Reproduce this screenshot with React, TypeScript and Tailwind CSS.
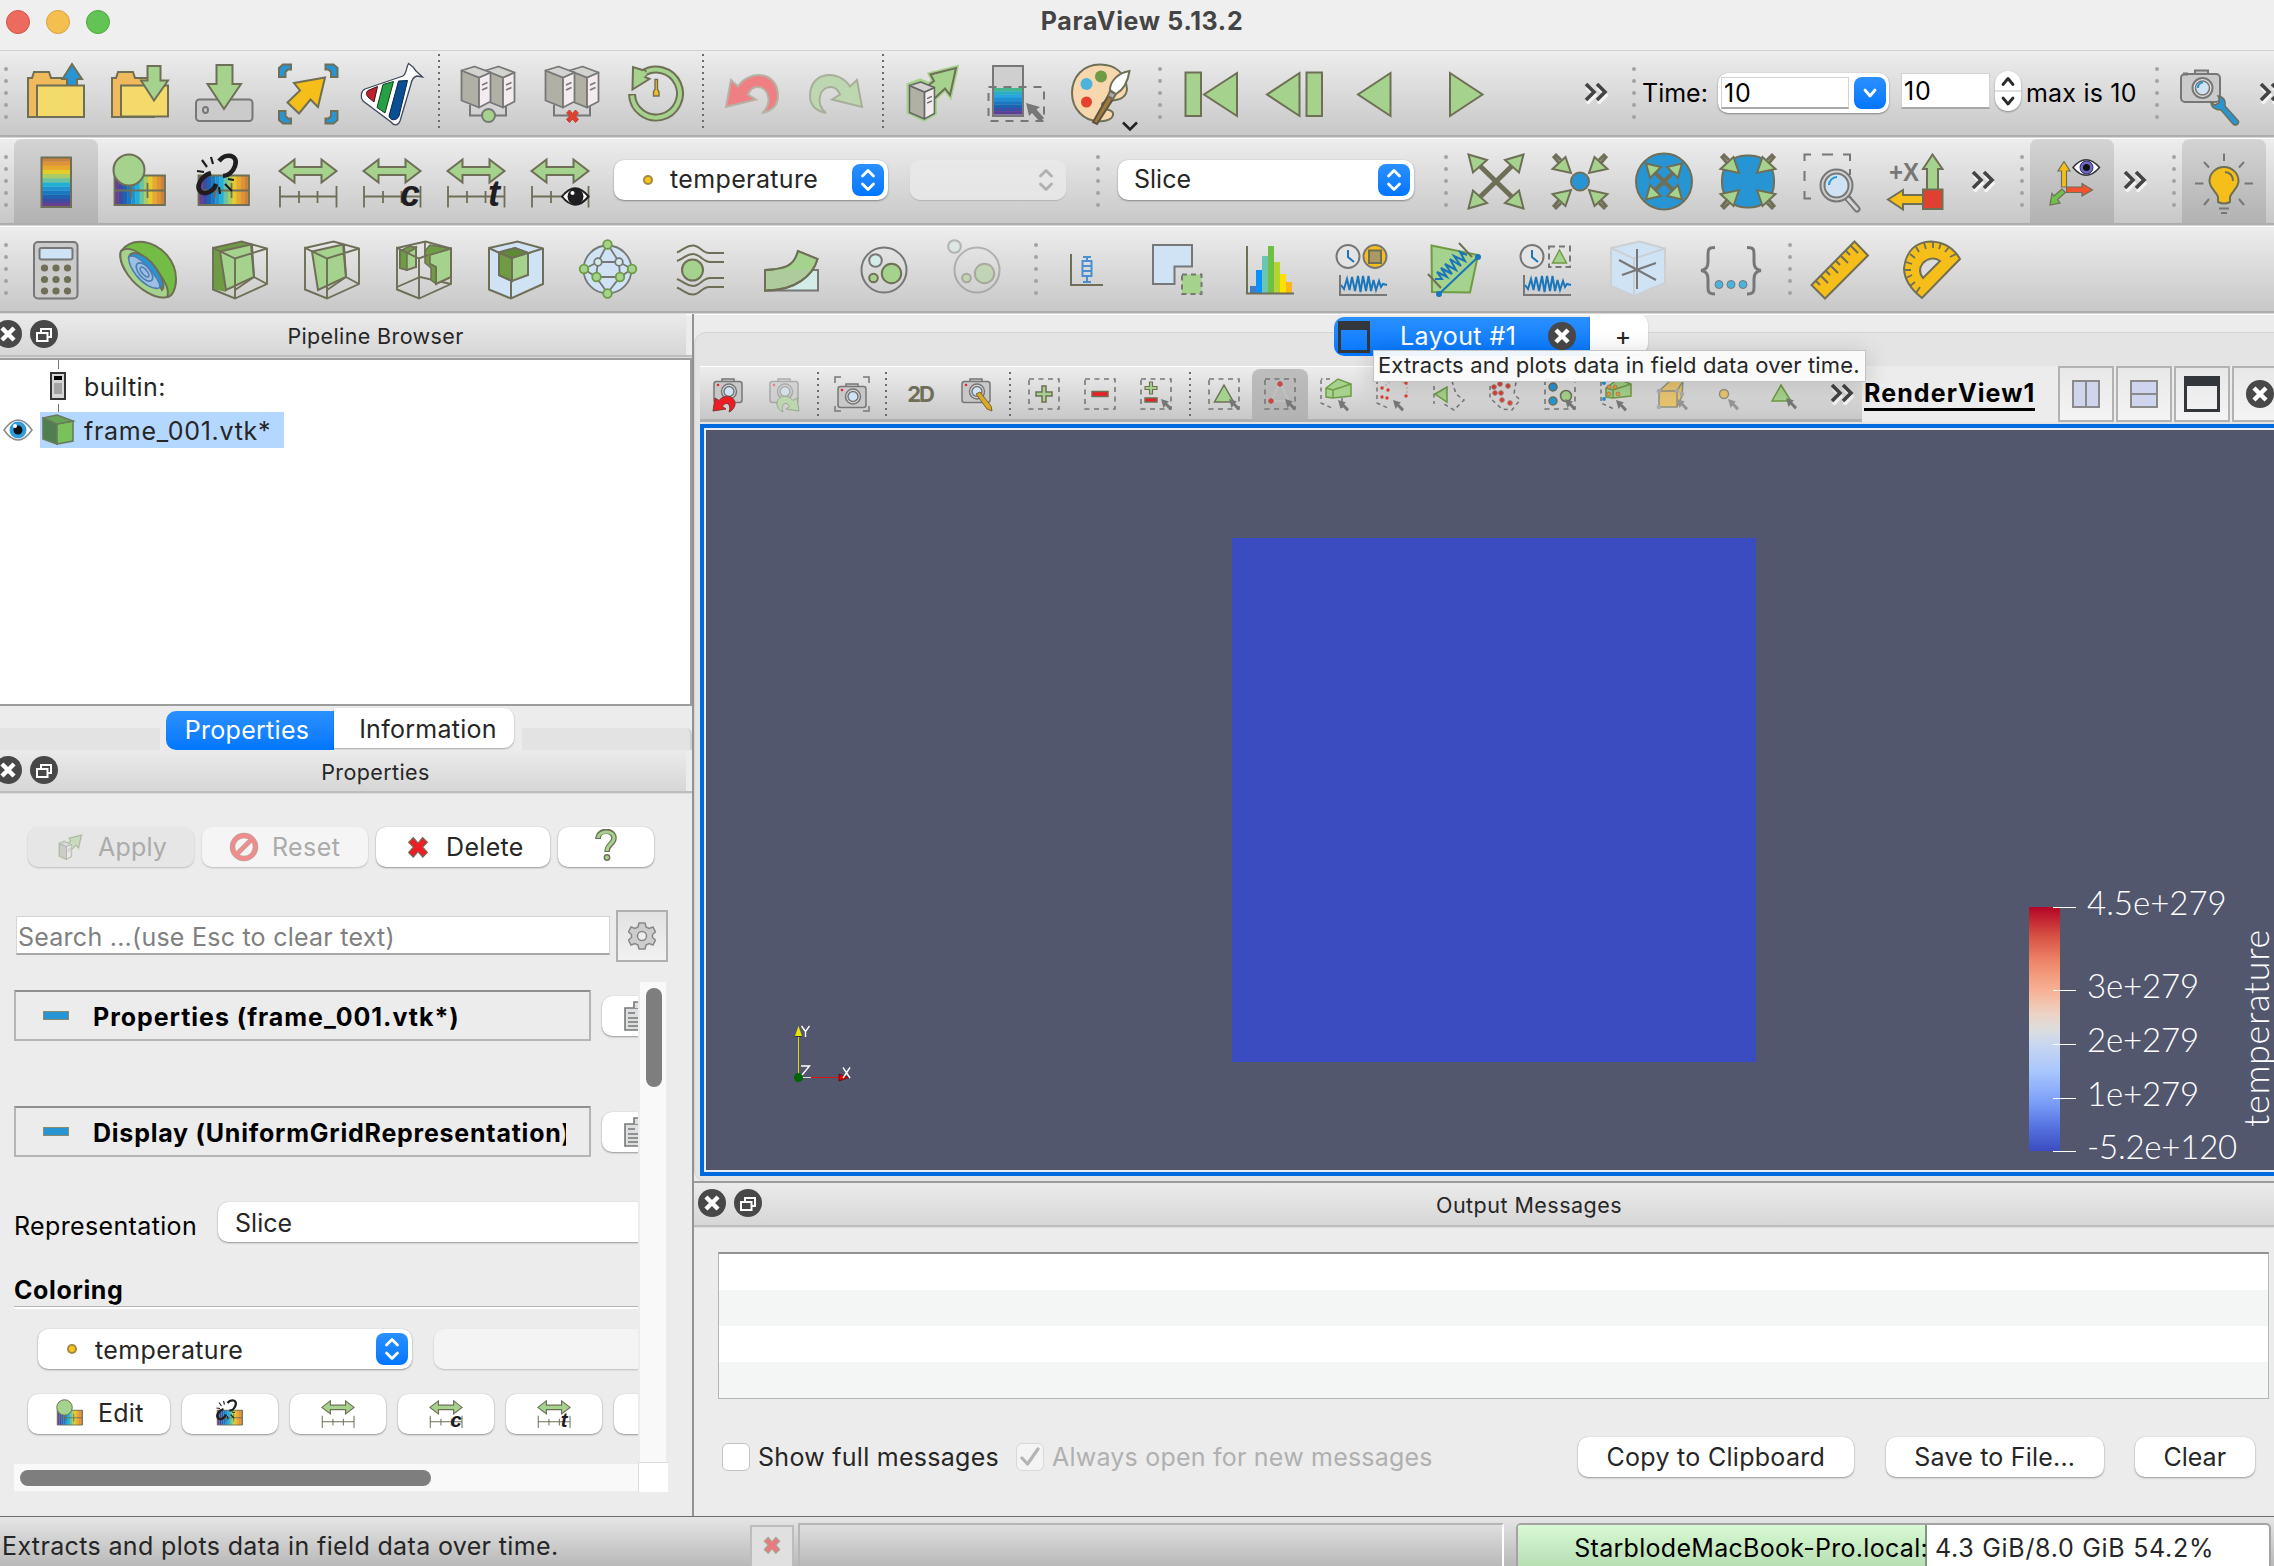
import React, { useLayoutEffect, useRef, useState } from "react";

const OL = "#6f6f57";
const GR = "#a5d28c";
const DG = "#6f9b45";
const BL = "#2795d4";
const LB = "#cfe3f5";
const YE = "#f5be18";
const GY = "#777777";

/* ---------- text that keeps a given line width by tracking ---------- */
function Fit({ w, className = "", children }: { w: number; className?: string; children: string }) {
  const ref = useRef<HTMLSpanElement>(null);
  const [ls, setLs] = useState(0);
  useLayoutEffect(() => {
    if (ref.current) {
      const natural = ref.current.offsetWidth;
      setLs((w - natural) / children.length);
    }
  }, []);
  return (
    <span ref={ref} className={`inline-block shrink-0 whitespace-pre ${className}`} style={{ letterSpacing: ls }}>
      {children}
    </span>
  );
}

type IP = { size?: number; className?: string };
function Svg({ size = 64, className = "", children, box = 64 }: IP & { children: React.ReactNode; box?: number }) {
  return (
    <svg
      width={size}
      height={size}
      viewBox={`0 0 ${box} ${box}`}
      className={`block shrink-0 overflow-visible ${className}`}
      fill="none"
      stroke={OL}
      strokeWidth={2}
      strokeLinejoin="miter"
    >
      {children}
    </svg>
  );
}

/* ---------- main toolbar icons ---------- */
const FolderBack = () => <path d="M4 56V17H8L10 11H25L27 17H46V56Z" fill="#f0b95c" />;
const OpenIcon = (p: IP) => (
  <Svg {...p}>
    <FolderBack />
    <path d="M43 26V18H38.5L48 3L58 18H53V26Z" fill={BL} />
    <path d="M13 24.500H60V56H13Z" fill="#f4da6b" />
  </Svg>
);
const LoadStateIcon = (p: IP) => (
  <Svg {...p}>
    <FolderBack />
    <path d="M13 24.500H60V55.500H13Z" fill="#f4da6b" />
    <path d="M39.500 5H52.500V19.500H60L46 39.500L33 19.500H39.500Z" fill={GR} />
  </Svg>
);
const SaveIcon = (p: IP) => (
  <Svg {...p}>
    <rect x="4" y="38.500" width="56.500" height="21.500" rx="3.500" fill="#cbcbcb" stroke={GY} />
    <ellipse cx="13.500" cy="49" rx="2.500" ry="3" stroke={GY} />
    <path d="M24.500 4H40.500V23H49L32 48L15.500 23H24.500Z" fill={GR} />
  </Svg>
);
const ExtractsIcon = (p: IP) => (
  <Svg {...p}>
    {["", "translate(64.500 0) scale(-1 1)", "translate(0 66) scale(1 -1)", "translate(64.500 66) scale(-1 -1)"].map((t) => (
      <path key={t} transform={t} d="M3 16V7L7 3.500H15V8.500H12L9.500 11V16Z" fill={BL} />
    ))}
    <path d="M49 16.500L42 46L34.500 38.500L23 52.500L11.500 41.500L24 29.500L18 22Z" fill={YE} />
  </Svg>
);
const CatalystIcon = (p: IP) => (
  <Svg {...p}>
    <path
      d="M5 28L43 15C47 12 46 7 48.500 2.500L53 6L56 10L62.500 16L57 15C53 16 51.500 20 51 23L40 60C38 65 34 65 31 61L3 40C0 36 1 30 5 28Z"
      fill="#fff"
      stroke="#3f4a5a"
      strokeWidth="1.300"
    />
    <path d="M8 29.500L17.500 25.500L14 41L8 36C6 34 6 31 8 29.500Z" fill="#bd1f2d" stroke="#3d1018" strokeWidth="1" />
    <path d="M23 23.500L33.500 20.500L25 52L17 46.500Z" fill="#27a045" stroke="#10401d" strokeWidth="1" />
    <path d="M38.500 20L47.500 19.500L39 55C37 60 30 60 29 55Z" fill="#0a4f94" stroke="#06264a" strokeWidth="1" />
  </Svg>
);
const Server = ({ t, s = GY }: { t?: string; s?: string }) => (
  <g transform={t} stroke={s} strokeWidth="1.800" strokeLinejoin="round">
    <path d="M0 4L17.500 11V41L0 34Z" fill="#b0b0a5" />
    <path d="M17.500 11L29 6V35L17.500 41Z" fill="#f4ebef" />
    <path d="M0 4L13 0L29 6L17.500 11Z" fill="#d3d3d0" />
    <path d="M20.500 18.500L26 16M20.500 23.500L26 21" strokeWidth="1.600" />
  </g>
);
const ConnectIcon = (p: IP) => (
  <Svg {...p}>
    <path d="M14 44V54.500H50V44" stroke={GY} />
    <Server t="translate(29.500 5.500)" />
    <Server t="translate(5.500 5.500)" />
    <circle cx="32.500" cy="54.500" r="6.500" fill={GR} stroke={GY} />
  </Svg>
);
const X_PATH = "M-6 -3L-3 -6L0 -2.500L3 -6L6 -3L3 0L6 3.500L3 6.500L0 3L-3 6.500L-6 3.500L-3 0Z";
const DisconnectIcon = (p: IP) => (
  <Svg {...p}>
    <path d="M14 44V54.500H50V44" stroke={GY} />
    <Server t="translate(29.500 5.500)" />
    <Server t="translate(5.500 5.500)" />
    <path transform="translate(32.500 55)" d={X_PATH} fill="#e0402f" stroke="#b9463a" strokeWidth="1" />
  </Svg>
);
const HistoryIcon = (p: IP) => (
  <Svg {...p}>
    <path d="M8 33A24 24 0 1 0 18 13" strokeWidth="8" />
    <path d="M8 34.500A24 24 0 1 0 18 13" stroke={GR} strokeWidth="4" />
    <path d="M9 6L8.500 28.500L25.500 18L20 15.500L21.500 10Z" fill={GR} />
    <path d="M14.500 14L20 9.500L23 13L18 18Z" fill={GR} stroke="none" />
    <path d="M31 18.500H33.500V28L35 31V35H29.500V31L31 28Z" fill={YE} strokeWidth="1.400" />
  </Svg>
);
const CURVE = "M6 46L11 19L18 25.500C28 9 58 9 58 35C58 45 51 50 42 52C53 43 49 26 37 26C32 26 29.500 30 28 33.500L36 38.500Z";
const UndoIcon = (p: IP) => (
  <Svg {...p}>
    <path d={CURVE} fill="#ee8084" stroke="#b6b2a4" />
  </Svg>
);
const RedoIcon = (p: IP) => (
  <Svg {...p}>
    <path transform="translate(64 0) scale(-1 1)" d={CURVE} fill="#bdd8b0" stroke="#a9ae9b" />
  </Svg>
);
const ApplyIcon = (p: IP) => (
  <Svg {...p}>
    <path d="M56 7L50 34L45 27.500L35 37L32 40L26 26L34 20L30.500 13.500Z" fill={GR} stroke={GR} strokeWidth="5" />
    <path d="M9 24L20 20L34.500 26V52L24 58L9 51Z" stroke={GR} strokeWidth="5" />
    <path d="M56 7L50 34L45 27.500L35 37L30 30L26 26L34 20L30.500 13.500Z" fill={GR} />
    <g transform="translate(9.500 21) scale(.86 .9)">
      <Server s="#666" />
    </g>
  </Svg>
);
const CMAP_V = ["#6b3f8f", "#3f4aa0", "#1f63b0", "#1878c0", "#1f93d2", "#22b1d6", "#6cc3a0", "#a8cc68", "#e3cd2a", "#e9a92b", "#e09332", "#c9833c"];
const SelectBarIcon = (p: IP) => (
  <Svg {...p}>
    <rect x="9" y="5" width="30" height="50" fill="#cfcfcf" stroke={GY} />
    {["#45b58f", "#25b0c8", "#2aa2dc", "#1f8fd3", "#1878c0", "#1d63b4", "#3a4fa5", "#5b3f94"].map((c, i) => (
      <rect key={c} x="10" y={27 + i * 3.300} width="28" height="3.500" fill={c} stroke="none" />
    ))}
    <rect x="4.500" y="26" width="55.500" height="34" strokeDasharray="8 7" stroke={GY} />
    <path d="M42 42L56 46L52.500 48.500L60 57L56 61L48 52L45 55Z" fill={GY} stroke="none" />
  </Svg>
);
const PaletteIcon = (p: IP) => (
  <Svg {...p}>
    <path d="M32 3.500C15 3.500 4 16 4 32C4 48 16 60 30 60C38 61 46 58 45 52C43 47 33 50 34 43C36 37 58 44 59 28C58 13 48 3.500 32 3.500Z" fill="#f7d8ae" />
    <circle cx="18.500" cy="23" r="6" fill="#4bb3dd" stroke="none" />
    <circle cx="33" cy="15.500" r="6" fill={DG} stroke="none" />
    <circle cx="18.500" cy="41" r="5.500" fill="#e5412d" stroke="none" />
    <path d="M40 35L45 38L29 63L25 61Z" fill="#a07a3c" stroke="#5d5440" />
    <path d="M42 30L48 33L45 38L40 35Z" fill="#a9a9a9" />
    <path d="M61.500 10C50 12 42 20 42 29L48 33C57 28 60 20 61.500 10Z" fill="#fff" />
    <path d="M55 61.500L62 68.500L69 61.500" stroke="#222" strokeWidth="2.600" />
  </Svg>
);
const FirstIcon = (p: IP) => (
  <Svg {...p}>
    <path d="M6.500 11.500H22V55H6.500ZM58 12V55L25 33.500Z" fill={GR} />
  </Svg>
);
const PrevIcon = (p: IP) => (
  <Svg {...p}>
    <path d="M43.500 11.500H59V55H43.500ZM36.500 12V55L4 33.500Z" fill={GR} />
  </Svg>
);
const BackIcon = (p: IP) => (
  <Svg {...p}>
    <path d="M43.500 12V55L11 33.500Z" fill={GR} />
  </Svg>
);
const PlayIcon = (p: IP) => (
  <Svg {...p}>
    <path d="M19 12V55L51.500 33.500Z" fill={GR} />
  </Svg>
);
const CameraToolIcon = (p: IP) => (
  <Svg {...p}>
    <rect x="18" y="9.500" width="13" height="4" fill="#cbcbcb" stroke={GY} />
    <rect x="4" y="13" width="39" height="28" rx="4" fill="#cbcbcb" stroke={GY} />
    <path d="M6 13H11" stroke={GY} strokeWidth="3" />
    <circle cx="25.500" cy="27" r="10" fill="#e4e4e4" stroke={GY} />
    <circle cx="25.500" cy="27" r="7" fill={LB} stroke={GY} strokeWidth="1.600" />
    <path d="M21 27A5 5 0 0 1 26 21.500" stroke={BL} />
    <path d="M41 35C47 36 49 40 48 45L61.500 60C62 64 58 65 56 63L44 49C38 49 34 46 34 41L38 44L42 42V37Z" fill={BL} strokeWidth="1.500" />
  </Svg>
);

/* ---------- variable / camera toolbar icons ---------- */
const ColorBarIcon = (p: IP) => (
  <Svg {...p}>
    {CMAP_V.map((c, i) => (
      <rect key={c} x="17" y={54 - i * 4.150} width="30" height="4.300" fill={c} stroke="none" />
    ))}
    <rect x="17.500" y="8.500" width="29.500" height="49.500" />
  </Svg>
);
const MapBox = () => (
  <g>
    {CMAP_V.map((c, i) => (
      <rect key={c} x={6.500 + i * 4.200} y="26" width="4.400" height="30" fill={c} stroke="none" />
    ))}
    <path d="M6.500 26.500H57V56H6.500ZM6.500 41.500H57M23 34V49M39.500 34V49" strokeWidth="1.800" />
  </g>
);
const EditMapIcon = (p: IP) => (
  <Svg {...p}>
    <MapBox />
    <circle cx="21" cy="21" r="15.500" fill={GR} />
  </Svg>
);
const SeparateMapIcon = (p: IP) => (
  <Svg {...p}>
    <MapBox />
    <g stroke="#1f1d20" strokeWidth="4.600">
      <path d="M27 12C34 3 47 6 43 17C41 23 36 27 31 27" />
      <path d="M19 24C9 27 3 38 9 43C14 46 22 42 24 35" />
      <path d="M10 11L15 18M19 8L21 15M5 22L12 23M27 38L28 45M33 35L40 42M36 30L42 31" strokeWidth="2.200" />
    </g>
  </Svg>
);
const RescaleBase = () => (
  <g>
    <path d="M3.500 22L18.500 10.500V18H45.500V10.500L60.500 22L45.500 33.500V26H18.500V33.500Z" fill={GR} />
    <path d="M4 37V58.500M60.500 37V58.500M4 47.500H60.500M23 42V54M41.500 42V54" strokeWidth="1.800" />
  </g>
);
const RescaleIcon = (p: IP) => (
  <Svg {...p}>
    <RescaleBase />
  </Svg>
);
const letterCls = "font-['Liberation_Sans',sans-serif] text-[36px] font-bold italic";
const RescaleCIcon = (p: IP) => (
  <Svg {...p}>
    <RescaleBase />
    <text x="40" y="57" className={letterCls} fill="#1f1d20" stroke="none">c</text>
  </Svg>
);
const RescaleTIcon = (p: IP) => (
  <Svg {...p}>
    <RescaleBase />
    <text x="44" y="57" className={letterCls} fill="#1f1d20" stroke="none">t</text>
  </Svg>
);
const RescaleVIcon = (p: IP) => (
  <Svg {...p}>
    <RescaleBase />
    <path d="M34 47.500Q47 31 60.500 47.500Q47 64 34 47.500Z" fill="#fff" stroke="#1f1d20" />
    <circle cx="47.500" cy="47.500" r="8" fill="#1f1d20" stroke="none" />
    <circle cx="44.500" cy="44" r="2" fill="#fff" stroke="none" />
  </Svg>
);
const FLIPS = ["", "translate(64 0) scale(-1 1)", "translate(0 65) scale(1 -1)", "translate(64 65) scale(-1 -1)"];
const ResetCamIcon = (p: IP) => (
  <Svg {...p}>
    {FLIPS.map((t) => (
      <g key={t} transform={t}>
        <path d="M14 15L32 32.500" strokeWidth="5" />
        <path d="M4.500 5.500L23 11L9 23.500Z" fill={GR} />
      </g>
    ))}
  </Svg>
);
const InArrow = () => (
  <g>
    <path d="M11 14L5 7M7 5L13 11" strokeWidth="3" />
    <path d="M23 24L17.500 8L4.500 20Z" fill={GR} />
  </g>
);
const ZoomClosestIcon = (p: IP) => (
  <Svg {...p}>
    {FLIPS.map((t) => (
      <g key={t} transform={t}><InArrow /></g>
    ))}
    <circle cx="32" cy="32.500" r="9" fill={BL} />
  </Svg>
);
const ResetDataIcon = (p: IP) => (
  <Svg {...p}>
    <circle cx="32" cy="32.500" r="28" fill={BL} />
    {FLIPS.map((t) => (
      <g key={t} transform={t}>
        <path d="M20 21L32 32.500" strokeWidth="4" />
        <path d="M14 14.500L29 18L18 29Z" fill={GR} />
      </g>
    ))}
  </Svg>
);
const ZoomDataIcon = (p: IP) => (
  <Svg {...p}>
    <rect x="6" y="6.500" width="52" height="52" rx="24" fill={BL} />
    {FLIPS.map((t) => (
      <g key={t} transform={t}><InArrow /></g>
    ))}
  </Svg>
);
const ZoomBoxIcon = (p: IP) => (
  <Svg {...p}>
    <path d="M4.500 12V5.500H11M22 5.500H33M43 5.500H50V12M4.500 22V32M4.500 42V49.500H11M50 20V26" stroke={GY} />
    <path d="M46 47L57 60" stroke={GY} strokeWidth="7" strokeLinecap="round" />
    <path d="M48 50L57 60" stroke="#d6d6d6" strokeWidth="3" strokeLinecap="round" />
    <circle cx="36.500" cy="36.500" r="16" fill="#cfcfcf" stroke={GY} />
    <circle cx="36.500" cy="36.500" r="12" fill={LB} stroke={GY} />
    <path d="M29 36A8 8 0 0 1 37 28" stroke={BL} />
  </Svg>
);
const PlusXIcon = (p: IP) => (
  <Svg {...p}>
    <text x="5" y="32" className="font-['Liberation_Sans',sans-serif] text-[26px] font-bold" textLength="30" lengthAdjust="spacingAndGlyphs" fill={GY} stroke="none">+X</text>
    <path d="M43 41V20H39L48.500 5.500L58.500 20H54V41Z" fill={GR} />
    <path d="M40 46V55H19V60.500L4 50.500L19 41V46Z" fill={YE} />
    <rect x="39" y="40.500" width="19.500" height="19.500" fill="#e0402f" />
  </Svg>
);
const AxesEyeIcon = (p: IP) => (
  <Svg {...p}>
    <path d="M26.500 38H42V34.500L52.500 41L42 47V43.500H26.500Z" fill="#f0532d" strokeWidth="1.200" />
    <path d="M21.500 38V22H18L24 12.500L30 22H26.500V38Z" fill={YE} strokeWidth="1.200" />
    <path d="M22 40L14 47L12 44.500L10 56L20 54L17.500 50.500L25.500 43.500Z" fill="#6cc24a" strokeWidth="1.200" />
    <path d="M33 18.500Q46 3 59.500 18.500Q46 34 33 18.500Z" fill="#fff" stroke="#333" strokeWidth="1.500" />
    <circle cx="46.500" cy="18.500" r="6.500" fill="#6f69c4" stroke="#2b2870" strokeWidth="1" />
    <circle cx="46.500" cy="18.500" r="3.500" fill="#111" stroke="none" />
  </Svg>
);
const BulbIcon = (p: IP) => (
  <Svg {...p}>
    <path d="M32 4.500V12M12 13L17 18.500M52 13L47 18.500M3 34.500H11.500M52.500 34.500H61M12 56L17 50M52 56L47 50M27 59.500H37M29 64H35" stroke={GY} />
    <path d="M26 53V48C24 42 17.500 39 17.500 32A14.500 14 0 0 1 46.500 32C46.500 39 40 42 38 48V53Q32 56 26 53Z" fill={YE} />
    <path d="M33 23Q41 24 41 32" />
  </Svg>
);

/* ---------- filter toolbar icons ---------- */
const CalcIcon = (p: IP) => (
  <Svg {...p}>
    <rect x="10" y="5" width="43.500" height="56.500" rx="4" fill="#cbcbcb" stroke={GY} />
    <rect x="15.500" y="11" width="33" height="11.500" rx="2" fill={LB} stroke={GY} />
    {[31, 42.500, 54].map((y) => [20.500, 32, 43.500].map((x) => <circle key={`${x}-${y}`} cx={x} cy={y} r="3.600" fill={OL} stroke="none" />))}
  </Svg>
);
const ContourIcon = (p: IP) => (
  <Svg {...p}>
    <path d="M5 14C12 5 20 4 28 5C46 8 60 24 60 42C60 52 56 60 51 60C30 58 0 34 5 14Z" fill="#73bd45" />
    <path d="M5 14C12 9 22 14 31 23C45 36 55 52 51 60C40 63 22 52 12 38C6 29 3 20 5 14Z" fill={GR} />
    <path d="M13 20C15 13 26 16 35 25C45 36 50 50 46 53C42 44 36 36 28 28C22 22 17 19 13 20Z" fill={BL} />
    <path d="M13 20C16 17 24 21 31 29C40 38 46 49 43 51C37 53 27 47 20 38C15 31 12 24 13 20Z" fill="#9cc0e4" stroke="#4e7db0" strokeWidth="1.600" />
    <ellipse cx="28.500" cy="35" rx="11" ry="5.500" transform="rotate(50 28.500 35)" stroke="#4e7db0" strokeWidth="1.600" />
    <ellipse cx="28.500" cy="35" rx="6" ry="2.500" transform="rotate(50 28.500 35)" stroke="#4e7db0" strokeWidth="1.500" />
  </Svg>
);
const Wire = () => <path d="M5 11L33.500 4.500L59 11.500V47L27 61.500L5 52.500V11L27 21.500L59 11.500M27 21.500V61.500M27 53L46 40L59 47M46 40L44 8" strokeWidth="1.900" />;
const ClipIcon = (p: IP) => (
  <Svg {...p}>
    <path d="M5 11L33.500 4.500L44 8L12 16L18 55L5 52Z" fill={DG} stroke="none" />
    <path d="M12 14.500L43 7.500L46 40L18 53Z" fill={GR} />
    <Wire />
  </Svg>
);
const SliceIcon = (p: IP) => (
  <Svg {...p}>
    <path d="M12 14.500L43 7.500L46 40L18 53Z" fill={GR} />
    <Wire />
  </Svg>
);
const ThresholdIcon = (p: IP) => (
  <Svg {...p}>
    <path d="M5 50L28 40L59 47M33 4V20" strokeWidth="1.800" />
    <path d="M8 14L24 10L24 30L15 33L8 31Z" fill={GR} />
    <path d="M8 14L18 9L24 11L15 16V33L8 31Z" fill={DG} strokeWidth="1.500" />
    <path d="M36 18L59 11.500V40L44 47V30L36 26Z" fill={GR} />
    <path d="M33 14L38 8L59 11.500L38 18V27L44 30V47L39 43V31L33 26Z" fill={DG} strokeWidth="1.500" />
    <path d="M5 11L33.500 4.500L59 11.500V47L27 61.500L5 52.500V11L27 21.500L36 18M27 21.500V61.500" strokeWidth="1.900" />
  </Svg>
);
const SubsetIcon = (p: IP) => (
  <Svg {...p}>
    <path d="M5 11L33.500 4.500L59 11.500V47L27 61.500L5 52.500Z" fill={LB} />
    <path d="M27 21.500V61.500M5 11L27 21.500L59 11.500" />
    <path d="M15 15.500L31 11L44 16V38L28 44L15 38Z" fill={GR} />
    <path d="M15 15.500L28 21V44L15 38Z" fill={DG} />
    <path d="M15 15.500L31 11L44 16L28 21Z" fill="#5e8a38" />
  </Svg>
);
const GlyphIcon = (p: IP) => (
  <Svg {...p}>
    <g stroke={GY} strokeWidth="1.800">
      <circle cx="31.500" cy="32.500" r="24" fill={LB} />
      <path d="M31.500 7L22 25H43L31.500 7M22 25L20 40H44L43 25L56 32L44 40L31.500 56L20 40L8 32L22 25" />
      {[[31.500, 7.500], [8, 32], [56, 32], [31.500, 56.500], [20.500, 40], [44, 40]].map(([x, y]) => (
        <circle key={`${x}-${y}`} cx={x} cy={y} r="4.300" fill={GR} stroke={DG} />
      ))}
      <circle cx="22" cy="25" r="3.800" fill="#d3ece8" />
      <circle cx="43" cy="25" r="3.800" fill="#d3ece8" />
    </g>
  </Svg>
);
const StreamIcon = (p: IP) => (
  <Svg {...p}>
    {["", "translate(0 66) scale(1 -1)"].map((t) => (
      <path key={t} transform={t} d="M9 15.500C17 12 18 8.500 25 8.500C32 8.500 34 16 41 16H56M9 24C17 21 18 17 25 17C32 17 35 25 42 25H56" />
    ))}
    <circle cx="24.500" cy="33" r="10.500" fill={GR} />
  </Svg>
);
const WarpIcon = (p: IP) => (
  <Svg {...p}>
    <rect x="5" y="33" width="53" height="20.500" fill="#d3ece8" stroke={GY} />
    <path d="M5 33C24 32 34 30 38 14L57.500 22C53 38 36 54 5 53.500Z" fill="#aecb9d" />
    <path d="M5 33C24 32 34 30 38 14L57.500 22C56 26 53 31 51 33Z" fill={GR} stroke="none" />
    <path d="M5 33C24 32 34 30 38 14L57.500 22C53 38 36 54 5 53.500Z" />
  </Svg>
);
const GroupIcon = (p: IP) => (
  <Svg {...p}>
    <circle cx="32" cy="33" r="22.500" stroke={GY} />
    <circle cx="23.500" cy="23.500" r="6.300" fill="#d3ece8" stroke={GY} />
    <circle cx="39.500" cy="36.500" r="9.700" fill={GR} />
    <circle cx="21.500" cy="41" r="4.300" fill={GR} />
  </Svg>
);
const UngroupIcon = (p: IP) => (
  <Svg {...p} className="opacity-45">
    <circle cx="33" cy="33" r="22.500" stroke={GY} />
    <circle cx="10.500" cy="9.500" r="6.300" fill="#d3ece8" stroke={GY} />
    <circle cx="40.500" cy="36.500" r="9.700" fill={GR} />
    <circle cx="22.500" cy="41" r="4.300" fill={GR} />
  </Svg>
);
const BoxPlotIcon = (p: IP) => (
  <Svg {...p}>
    <path d="M17 17V48H49" />
    <path d="M33 20V24M29 20H37M33 39V45M29 45H37M28.500 24H37.500V39H28.500ZM28.500 29H37.500M28.500 34H37.500" stroke="#4a90d0" />
  </Svg>
);
const ExtractSelIcon = (p: IP) => (
  <Svg {...p}>
    <path d="M7 8H46V29.500H28.500V47H7Z" fill={LB} stroke={GY} />
    <rect x="36" y="37.500" width="19.500" height="19.500" fill={GR} stroke={GY} strokeDasharray="5 4" />
  </Svg>
);
const HistogramIcon = (p: IP) => (
  <Svg {...p}>
    {[[49, "#3b7fc4"], [33, "#0a90ff"], [19, "#6cc5b0"], [9, "#6fbf44"], [25, "#b5d334"], [37, "#ffe100"], [45, "#fbb713"]].map(([y, c], i) => (
      <rect key={i} x={12 + i * 6} y={y as number} width="6" height={56 - (y as number)} fill={c as string} stroke="none" />
    ))}
    <path d="M9 9V56.500H56" />
  </Svg>
);
const Wave = () => (
  <g>
    <path d="M10 38V58H57" stroke={GY} />
    <path d="M11 48L14 52L17 42L19.500 53L22 40L25 54L28 39L30.500 55L33 39L36 54L38.500 39L41 54L43.500 43L46 53L49 44L51 50L53 47L57 48" stroke="#1a75bb" />
  </g>
);
const Clock = () => (
  <g>
    <circle cx="18" cy="19.500" r="11.500" stroke={GY} fill="#e4e4e4" />
    <path d="M18 13V20L24 25" stroke="#1a75bb" />
  </g>
);
const PlotTimeIcon = (p: IP) => (
  <Svg {...p}>
    <Clock />
    <circle cx="45" cy="19.500" r="11.500" fill={YE} stroke={GY} />
    <rect x="39" y="13.500" width="12" height="12.500" fill="#ab9a66" stroke={OL} />
    <Wave />
  </Svg>
);
const PlotLineIcon = (p: IP) => (
  <Svg {...p}>
    <path d="M9.500 8.500L56 18L48 55.500L10 55Z" fill={GR} stroke={DG} />
    <path d="M37 6L50 20M6 37L19 51" />
    <path d="M13 42L20 42L15 35L25 40L19 31L30 37L23 27L34 33L28 22L39 29L32 19L43 24L38 15L45 18" stroke="#1a75bb" />
    <path d="M17 57L56 20" stroke="#1a75bb" />
    <circle cx="17" cy="57" r="3" fill="#1a75bb" stroke="none" />
    <circle cx="56" cy="20" r="3" fill="#1a75bb" stroke="none" />
  </Svg>
);
const PlotSelTimeIcon = (p: IP) => (
  <Svg {...p}>
    <Clock />
    <rect x="35" y="9.500" width="21" height="20.500" stroke={GY} strokeDasharray="6 4" />
    <path d="M45.500 13L52.500 26H38.500Z" fill={GR} stroke={DG} strokeWidth="1.400" />
    <Wave />
  </Svg>
);
const FreezeIcon = (p: IP) => (
  <Svg {...p}>
    <path d="M5 11L33.500 4.500L59 11.500V46L28 59L5 49Z" fill={LB} stroke="#cbd0d4" />
    <path d="M5 11L28 21.500L59 11.500M28 21.500V59" stroke="#cbd0d4" />
    <path d="M31 12V52M13 23L50 43M50 26L16 38" stroke={GY} />
  </Svg>
);
const BracesIcon = (p: IP) => (
  <Svg {...p}>
    <path d="M17 10.500C10 10.500 10 13 10 17V25C10 30 8 33 3 33.500C8 34 10 37 10 42V50C10 54 10 57 17 57M49 10.500C56 10.500 56 13 56 17V25C56 30 58 33 63 33.500C58 34 56 37 56 42V50C56 54 56 57 49 57" stroke={GY} strokeWidth="3" />
    {[21, 33, 45].map((x) => (
      <circle key={x} cx={x} cy="47.500" r="4" fill="#4bb3dd" stroke={GY} strokeWidth="1" />
    ))}
  </Svg>
);
const RulerIcon = (p: IP) => (
  <Svg {...p}>
    <path d="M46.500 4.500L60 18.500L17 61.500L3.500 48Z" fill={YE} />
    <path d="M8 44L12 48M13 39L20 46M18 34L22 38M23 29L30 36M28 24L32 28M33 19L40 26M38 14L42 18M43 9L50 16" />
  </Svg>
);
const ProtractorIcon = (p: IP) => (
  <Svg {...p}>
    <path d="M60 22L22 61C8 50 4 40 4 31C6 14 16 5 31 4.500C44 5 53 10 60 22Z" fill={YE} />
    <path d="M40 24L23 41C19 36 19 31 23 26C28 21 35 20 40 24Z" fill="#dcdcdc" />
    <path d="M5 33H11M6 25L12 27M10 17L15 21M16 10L19 15M24 6L26 12M33 5V11M41 6L39 12M49 10L45 15M56 17L50 20M6 41L12 38M10 49L15 45M16 56L20 50" strokeWidth="1.800" />
  </Svg>
);

/* ---------- render view toolbar icons, 32px box ---------- */
const MiniCam = ({ y = 0, x = 0, fade = false }: { x?: number; y?: number; fade?: boolean }) => (
  <g transform={`translate(${x} ${y})`} opacity={fade ? 0.5 : 1} strokeWidth="1.500" stroke={GY}>
    <rect x="10" y="1" width="12" height="3" fill="#cbcbcb" />
    <rect x="2" y="3.500" width="28" height="21" rx="2.500" fill="#c8c8c8" />
    <circle cx="17" cy="13.500" r="7.500" fill="#ddd" />
    <circle cx="17" cy="13.500" r="5" fill={LB} />
    <circle cx="6" cy="7" r="1.300" fill="#e23" stroke="none" />
  </g>
);
const MC = "M1 33L3 20L7 22.500C13 15 24 18 23 27C22 30 20 33 17 34C19 29 17 25 14 25.500C12 26 11 27 10.500 28.500L14 31Z";
const Cursor = ({ x = 21, y = 21 }: { x?: number; y?: number }) => (
  <path transform={`translate(${x} ${y})`} d="M0 0L8 2.500L6 4L11 9L9 11.500L4.500 6.500L2.500 9Z" fill={GY} stroke="none" />
);
const Dash = () => <rect x="1" y="1" width="30" height="30" stroke={GY} strokeWidth="1.600" strokeDasharray="5 4.500" />;
const S = (p: { children: React.ReactNode }) => (
  <Svg size={32} box={32}>
    <g strokeWidth="1.500">{p.children}</g>
  </Svg>
);
const PLUS = "M14 8H18V14H24V18H18V24H14V18H8V14H14Z";

/* ---------- building blocks ---------- */
const Cell = ({ children, className = "w-[84px]" }: { children?: React.ReactNode; className?: string }) => (
  <div className={`flex h-full shrink-0 items-center justify-center ${className}`}>{children}</div>
);
const Sep = ({ className = "w-3" }: { className?: string }) => (
  <div className={`flex h-full shrink-0 justify-center py-[3px] ${className}`}>
    <div className="h-full w-[2px] bg-[repeating-linear-gradient(to_bottom,#6b6b6b_0_2px,transparent_2px_6px)]" />
  </div>
);
const Grip = ({ className }: { className: string }) => (
  <div className={`flex h-full shrink-0 flex-col justify-center gap-2 ${className}`}>
    {[0, 1, 2, 3, 4].map((i) => (
      <div key={i} className="size-1 rounded-full bg-[#a2a2a2]" />
    ))}
  </div>
);
const More = ({ className = "" }: { className?: string }) => (
  <svg width="28" height="22" viewBox="0 0 28 22" className={`block shrink-0 ${className}`} fill="none" strokeWidth="3.600">
    <path d="M3 4L11 12L3 20M14 4L22 12L14 20" stroke="#f4f4f4" transform="translate(1 1.500)" />
    <path d="M3 2L11 10L3 18M14 2L22 10L14 18" stroke="#444" />
  </svg>
);
const Toolbar = ({ children }: { children: React.ReactNode }) => (
  <div className="flex h-[88px] w-full shrink-0 flex-col">
    <div className="flex h-[84px] w-full items-center overflow-hidden bg-linear-to-b from-[#ededed] to-[#c8c8c8]">{children}</div>
    <div className="h-[2px] bg-[#adadad]" />
    <div className="h-px bg-[#d8d8d8]" />
    <div className="h-px bg-white" />
  </div>
);
const UpDown = ({ className = "bg-linear-to-b from-[#2a90ff] to-[#0076ff]", color = "#fff" }: { className?: string; color?: string }) => (
  <div className={`flex h-8 w-8 shrink-0 items-center justify-center rounded-[8px] ${className}`}>
    <svg width="16" height="24" viewBox="0 0 16 24" fill="none" stroke={color} strokeWidth="2.800" strokeLinecap="round" strokeLinejoin="round">
      <path d="M2.500 8L8 2.500L13.500 8M2.500 16L8 21.500L13.500 16" />
    </svg>
  </div>
);
const box = "flex shrink-0 items-center rounded-[10px] bg-white shadow-[0_1px_2px_rgba(0,0,0,0.35),0_0_1px_rgba(0,0,0,0.2)]";
const Dot = () => <div className="size-2.5 shrink-0 rounded-full border-2 border-[#a08a40] bg-[#fcc31d]" />;
const RoundX = ({ className = "" }: { className?: string }) => (
  <svg width="28" height="28" viewBox="0 0 28 28" className={`block shrink-0 ${className}`}>
    <circle cx="14" cy="14" r="14" fill="#484848" />
    <path d="M9.500 9.500L18.500 18.500M18.500 9.500L9.500 18.500" stroke="#fff" strokeWidth="4.400" strokeLinecap="square" />
  </svg>
);
const RoundFloat = ({ className = "" }: { className?: string }) => (
  <svg width="28" height="28" viewBox="0 0 28 28" className={`block shrink-0 ${className}`} fill="none" stroke="#fff" strokeWidth="2">
    <circle cx="14" cy="14" r="14" fill="#484848" stroke="none" />
    <path d="M11 12V9H21V17H18" />
    <rect x="7" y="13" width="10.500" height="8" />
  </svg>
);
const DockHeader = ({ title, w, pad, shift, className = "h-[44px]" }: { title: string; w: number; pad: string; shift: string; className?: string }) => (
  <div className={`flex w-full shrink-0 flex-col ${className}`}>
    <div className={`flex w-full flex-1 items-center bg-linear-to-b from-[#ebebeb] to-[#d6d6d6] ${pad}`}>
      <RoundX className="mb-0.5" />
      <RoundFloat className="mb-0.5 ml-2" />
      <div className={`flex flex-1 justify-center pt-1 ${shift}`}>
        <Fit w={w} className="text-[21.5px] text-[#262626]">{title}</Fit>
      </div>
    </div>
    <div className="h-[2px] bg-[#bdbdbd]" />
    <div className="h-px bg-[#dedede]" />
  </div>
);
const MiniBtn = ({ children, className = "w-[96px]" }: { children?: React.ReactNode; className?: string }) => (
  <div className={`${box} h-10 justify-center pb-0.5 ${className}`}>{children}</div>
);
const CopyIcon = () => (
  <svg width="28" height="30" viewBox="0 0 28 30" fill="#dcdfe0" stroke="#777" strokeWidth="1.600" className="block shrink-0">
    <path d="M1 7H24V29H1Z" />
    <path d="M10 7V1H26V7" />
    <path d="M4 12H11M4 17H20M4 21H20M4 25H20" />
  </svg>
);
const GroupHeader = ({ title, w }: { title: string; w: number }) => (
  <div className="flex h-[51px] shrink-0 items-center">
    <div className="flex h-full w-[577px] shrink-0 items-center border-2 border-t-[#8f8f8f] border-r-[#b5b5b5] border-b-[#b5b5b5] border-l-[#b5b5b5] pl-[27px]">
      <div className="h-[9px] w-[26px] shrink-0 border border-[#8a8a6e] bg-[#2795d4]" />
      <div className="mt-[3px] ml-6 w-[473px] overflow-hidden">
        <Fit w={w} className="py-1.5 text-[25px] font-bold text-black">{title}</Fit>
      </div>
    </div>
    <div className={`${box} ml-[11px] h-10 w-[90px] pl-[22px]`}>
      <CopyIcon />
    </div>
  </div>
);

const ViewButton = ({ children }: { children: React.ReactNode }) => (
  <div className="mr-0.5 flex h-[56px] w-14 shrink-0 items-center justify-center border-2 border-[#b2b2b2] bg-linear-to-b from-[#e8e8e8] to-[#f4f4f4]">{children}</div>
);

const legend: [string, string, number][] = [
  ["4.5e+279", "top-[452px]", 140],
  ["3e+279", "top-[535px]", 112],
  ["2e+279", "top-[589px]", 112],
  ["1e+279", "top-[643px]", 112],
  ["-5.2e+120", "top-[696px]", 150],
];

export default function App() {
  return (
    <div className="relative flex h-[1566px] w-[2274px] flex-col overflow-hidden bg-[#ececec] font-['Inter',sans-serif] text-[25px] leading-none text-[#262626]">
      {/* title bar */}
      <div className="flex h-[51px] w-full shrink-0 items-start border-b border-[#d2d2d2] bg-[#efefef]">
        <div className="flex w-[200px] gap-4 pt-2.5 pl-1.5">
          <div className="size-6 rounded-full border border-[#d2544a] bg-[#ed6a5f]" />
          <div className="size-6 rounded-full border border-[#d8a141] bg-[#f5bf4f]" />
          <div className="size-6 rounded-full border border-[#51a73e] bg-[#62c454]" />
        </div>
        <div className="flex flex-1 justify-center pt-[9px]">
          <Fit w={203} className="text-[25px] font-bold text-[#444]">ParaView 5.13.2</Fit>
        </div>
        <div className="w-[190px]" />
      </div>

      <Toolbar>
        <Grip className="w-[14px] pl-[4px]" />
        <Cell><OpenIcon /></Cell>
        <Cell><LoadStateIcon /></Cell>
        <Cell><SaveIcon /></Cell>
        <Cell><ExtractsIcon /></Cell>
        <Cell><CatalystIcon /></Cell>
        <Sep className="w-3 pr-0.5" />
        <Cell><ConnectIcon /></Cell>
        <Cell><DisconnectIcon /></Cell>
        <Cell><HistoryIcon /></Cell>
        <Sep className="w-3 pr-0.5" />
        <Cell><UndoIcon /></Cell>
        <Cell><RedoIcon /></Cell>
        <Sep className="w-3 pr-0.5" />
        <Cell><ApplyIcon /></Cell>
        <Cell><SelectBarIcon /></Cell>
        <Cell><PaletteIcon /></Cell>
        <Grip className="w-[27px] pl-[16px]" />
        <Cell><FirstIcon /></Cell>
        <Cell><PrevIcon /></Cell>
        <Cell><BackIcon /></Cell>
        <Cell><PlayIcon /></Cell>
        <More className="ml-[78px]" />
        <Grip className="ml-[21px] w-[10px]" />
        <Fit w={66} className="text-black">Time:</Fit>
        <div className={`${box} ml-[10px] h-10 w-[171px] justify-between pr-[3px] pl-[3px]`}>
          <div className="flex h-8 w-[128px] items-center border border-b-2 border-[#d2d2d2] border-b-[#a8a8a8] pt-0.5 pl-[2px] text-black">
            <Fit w={28}>10</Fit>
          </div>
          <div className="flex h-8 w-8 items-center justify-center rounded-[8px] bg-linear-to-b from-[#2a90ff] to-[#0076ff]">
            <svg width="16" height="12" viewBox="0 0 16 12" fill="none" stroke="#fff" strokeWidth="2.800" strokeLinecap="round" strokeLinejoin="round"><path d="M3 3L8 9L13 3" /></svg>
          </div>
        </div>
        <div className="mb-1 ml-3 flex h-9 w-[89px] shrink-0 items-center border border-b-2 border-[#d2d2d2] border-b-[#a8a8a8] bg-white pt-0.5 pl-[2px] text-black">
          <Fit w={28}>10</Fit>
        </div>
        <div className="mb-1 ml-[5px] flex h-10 w-[26px] shrink-0 flex-col items-center justify-around rounded-[13px] bg-white shadow-[0_1px_2px_rgba(0,0,0,0.35)]">
          <svg width="26" height="40" viewBox="0 0 26 40" fill="none" stroke="#2b2b2b" strokeWidth="2.800" strokeLinecap="round" strokeLinejoin="round">
            <path d="M0 20H26" stroke="#d9d9d9" strokeWidth="1.500" />
            <path d="M8 13.500L13 7.500L18 13.500M8 27L13 33L18 27" />
          </svg>
        </div>
        <Fit w={111} className="ml-[5px] text-black">max is 10</Fit>
        <Grip className="ml-[18px] w-[22px]" />
        <CameraToolIcon />
        <More className="ml-[17px]" />
      </Toolbar>

      <Toolbar>
        <Grip className="w-[14px] pl-[4px]" />
        <Cell className="w-[84px] rounded-t-[8px] bg-linear-to-b from-[#d4d4d4] to-[#b2b2b2]"><ColorBarIcon /></Cell>
        <Cell><EditMapIcon /></Cell>
        <Cell><SeparateMapIcon /></Cell>
        <Cell><RescaleIcon /></Cell>
        <Cell><RescaleCIcon /></Cell>
        <Cell><RescaleTIcon /></Cell>
        <Cell><RescaleVIcon /></Cell>
        <div className={`${box} mb-[3px] ml-[12px] h-10 w-[274px] pr-[4px] pl-[29px]`}>
          <Dot />
          <Fit w={148} className="ml-[17px]">temperature</Fit>
          <div className="flex-1" />
          <UpDown />
        </div>
        <div className="mb-[3px] ml-[22px] flex h-10 w-[156px] shrink-0 items-center justify-end rounded-[10px] bg-[#eaeaea]/80 pr-[4px] shadow-[0_1px_1px_rgba(0,0,0,0.15)]">
          <UpDown className="" color="#b0b0b0" />
        </div>
        <Grip className="w-[52px] pl-[30px]" />
        <div className={`${box} mb-[3px] h-10 w-[296px] pr-[4px] pl-[16px]`}>
          <Fit w={57}>Slice</Fit>
          <div className="flex-1" />
          <UpDown />
        </div>
        <Grip className="w-[40px] pl-[30px]" />
        <Cell><ResetCamIcon /></Cell>
        <Cell><ZoomClosestIcon /></Cell>
        <Cell><ResetDataIcon /></Cell>
        <Cell><ZoomDataIcon /></Cell>
        <Cell><ZoomBoxIcon /></Cell>
        <Cell><PlusXIcon /></Cell>
        <More className="ml-[12px]" />
        <Grip className="w-[32px] pl-[22px]" />
        <Cell className="w-[84px] rounded-t-[8px] bg-linear-to-b from-[#d4d4d4] to-[#b2b2b2]"><AxesEyeIcon /></Cell>
        <More className="ml-[8px]" />
        <Grip className="w-[32px] pl-[22px]" />
        <Cell className="w-[84px] rounded-t-[8px] bg-linear-to-b from-[#d4d4d4] to-[#b2b2b2]"><BulbIcon /></Cell>
      </Toolbar>

      <Toolbar>
        <Grip className="w-[10px] pl-[4px]" />
        {[CalcIcon, ContourIcon, ClipIcon, SliceIcon, ThresholdIcon, SubsetIcon, GlyphIcon, StreamIcon, WarpIcon, GroupIcon, UngroupIcon].map((I, i) => (
          <Cell key={i} className="w-[92px]"><I /></Cell>
        ))}
        <Grip className="w-[18px] pl-[12px]" />
        {[BoxPlotIcon, ExtractSelIcon, HistogramIcon, PlotTimeIcon, PlotLineIcon, PlotSelTimeIcon, FreezeIcon, BracesIcon].map((I, i) => (
          <Cell key={i} className="w-[92px]"><I /></Cell>
        ))}
        <Grip className="w-[18px] pl-[12px]" />
        <Cell className="w-[92px]"><RulerIcon /></Cell>
        <Cell className="w-[92px]"><ProtractorIcon /></Cell>
      </Toolbar>

      {/* docks and view */}
      <div className="-mt-px flex h-[1202px] w-full shrink-0">
        <div className="flex h-full w-[692px] shrink-0 flex-col">
          <DockHeader title="Pipeline Browser" w={176} pad="-ml-[6px]" shift="pl-[7px]" />
          <div className="flex h-[348px] w-full shrink-0 flex-col border-t-2 border-r-2 border-b-2 border-t-[#9c9c9c] border-r-[#9c9c9c] border-b-[#9c9c9c] bg-white">
            <div className="flex h-[52px] items-center">
              <div className="ml-[50px] flex h-full w-4 flex-col items-center">
                <div className="h-[9px] w-px bg-[#777]" />
                <div className="mt-[3px] flex h-7 w-4 flex-col items-center gap-[3px] border-2 border-[#333] bg-[#d5d5d5] pt-0.5">
                  <div className="h-1 w-2 bg-black" />
                  <div className="h-[11px] w-2 bg-[#a3a3a3]" />
                </div>
                <div className="mt-1 h-2 w-px bg-[#777]" />
              </div>
              <Fit w={82} className="mt-0.5 ml-[18px]">builtin:</Fit>
            </div>
            <div className="flex h-9 items-center">
              <svg width="30" height="24" viewBox="0 0 30 24" className="ml-[3px] shrink-0">
                <path d="M1 12Q15 -8 29 12Q15 32 1 12Z" fill="#fff" stroke="#8a8a8a" strokeWidth="1.500" />
                <circle cx="15" cy="12" r="8.500" fill="#2f9bdc" />
                <circle cx="15" cy="12" r="4.500" fill="#111" />
                <circle cx="12" cy="8" r="2" fill="#fff" />
              </svg>
              <div className="ml-[7px] flex h-9 w-[244px] items-center bg-[#b3d7ff]">
                <svg width="34" height="32" viewBox="0 0 34 32" className="ml-0.5 shrink-0" stroke="#6a7a5e" strokeWidth="1.600">
                  <path d="M1 4L15 10V30L1 25Z" fill="#4e7f4c" />
                  <path d="M15 10L31 7V27L15 30Z" fill="#78c15c" />
                  <path d="M1 4L15 1L31 7L15 10Z" fill="#67a355" />
                </svg>
                <Fit w={187} className="mt-0.5 ml-[8px]">frame_001.vtk*</Fit>
              </div>
            </div>
          </div>
          <div className="flex h-11 w-full shrink-0 items-end">
            <div className="h-[22px] w-[160px] bg-[#e3e3e3]" />
            <div className="ml-[6px] flex h-[39px] w-[168px] items-center justify-center rounded-l-[10px] bg-linear-to-b from-[#2a90ff] to-[#0076ff] pr-1.5 text-white">
              <Fit w={125}>Properties</Fit>
            </div>
            <div className="mb-[2px] flex h-10 w-[180px] items-center justify-center rounded-r-[10px] bg-white pt-0.5 pl-2 shadow-[0_1px_2px_rgba(0,0,0,0.3)]">
              <Fit w={138}>Information</Fit>
            </div>
            <div className="ml-2 h-[22px] flex-1 rounded-tr-[6px] border-r-2 border-[#d0d0d0] bg-[#e3e3e3]" />
          </div>
          <DockHeader title="Properties" w={109} pad="-ml-[6px]" shift="pl-[7px]" />
          <div className="flex w-full flex-1 flex-col">
            <div className="mt-[33px] flex h-10 shrink-0 gap-2 pl-7">
              <div className="flex h-10 w-[166px] items-center rounded-[10px] bg-[#e6e6e6] pl-[27px] text-[#ababab] shadow-[0_1px_2px_rgba(0,0,0,0.2)]">
                <ApplyIcon size={30} className="opacity-45" />
                <Fit w={69} className="ml-[13px]">Apply</Fit>
              </div>
              <div className="flex h-10 w-[166px] items-center rounded-[10px] bg-[#f5f5f5] pl-[27px] text-[#ababab] shadow-[0_1px_2px_rgba(0,0,0,0.2)]">
                <svg width="30" height="30" viewBox="0 0 30 30" fill="none">
                  <path d="M7.500 22.500L22.500 7.500" stroke="#b9a79e" strokeWidth="5" />
                  <circle cx="15" cy="15" r="11.500" stroke="#b9a79e" strokeWidth="5.500" />
                  <circle cx="15" cy="15" r="11.500" stroke="#f28b8b" strokeWidth="3.800" />
                  <path d="M7 23L23 7" stroke="#f28b8b" strokeWidth="3.500" />
                </svg>
                <Fit w={68} className="ml-[13px]">Reset</Fit>
              </div>
              <div className={`${box} h-10 w-[174px] pl-[31px]`}>
                <svg width="22" height="22" viewBox="-7 -7 14 14"><path d={X_PATH} fill="#ee1c24" stroke="#6f6f57" strokeWidth=".7" /></svg>
                <Fit w={78} className="ml-[17px]">Delete</Fit>
              </div>
              <div className={`${box} h-10 w-[96px] justify-center pb-1`}>
                <svg width="22" height="32" viewBox="0 0 22 32" fill="none">
                  <path d="M3 10C3 0 19 0 19 9C19 15 12 15 12 23" stroke={OL} strokeWidth="5.500" />
                  <path d="M3 9C4 1 19 1 19 9C19 15 12 15 12 22" stroke={GR} strokeWidth="3" />
                  <circle cx="12" cy="28.500" r="2.700" fill={GR} stroke={OL} strokeWidth="1.400" />
                </svg>
              </div>
            </div>
            <div className="mt-[42px] flex h-[53px] shrink-0 items-center pl-4">
              <div className="flex h-[39px] w-[594px] items-center border border-b-2 border-[#d5d5d5] border-b-[#a8a8a8] bg-white pt-1 pl-[1px] text-[#808080]">
                <Fit w={377}>Search ...(use Esc to clear text)</Fit>
              </div>
              <div className="ml-1.5 flex h-[52px] w-[52px] items-center justify-center border-2 border-[#b0b0b0] bg-linear-to-b from-[#e2e2e2] to-[#f1f1f1]">
                <svg width="28" height="28" viewBox="0 0 28 28" fill="#cdcdcd" stroke="#888" strokeWidth="1.500">
                  <path d="M11 1H17L18 5L21 6.500L25 5L27.500 10L24.500 12.500V15.500L27.500 18L25 23L21 21.500L18 23L17 27H11L10 23L7 21.500L3 23L.5 18L3.500 15.500V12.500L.5 10L3 5L7 6.500L10 5Z" />
                  <circle cx="14" cy="14" r="4.500" fill="#eee" />
                </svg>
              </div>
            </div>
            <div className="mt-[20px] flex h-[480px] shrink-0 pl-[14px]">
              <div className="flex h-full w-[624px] shrink-0 flex-col overflow-hidden pt-2">
                <GroupHeader title="Properties (frame_001.vtk*)" w={367} />
                <div className="h-[65px] shrink-0" />
                <GroupHeader title="Display (UniformGridRepresentation)" w={479} />
                <div className="mt-[45px] flex h-10 shrink-0 items-center">
                  <Fit w={183} className="mt-2 text-black">Representation</Fit>
                  <div className={`${box} ml-[21px] h-10 w-[500px] pt-0.5 pl-[17px]`}><Fit w={57}>Slice</Fit></div>
                </div>
                <Fit w={109} className="mt-[36px] self-start font-bold text-black">Coloring</Fit>
                <div className="mt-[3px] h-[3px] w-full shrink-0 border-t border-[#b4b4b4] bg-white" />
                <div className="mt-[20px] flex h-10 shrink-0 items-center pl-6">
                  <div className={`${box} h-10 w-[374px] pr-[4px] pl-[29px]`}>
                    <Dot />
                    <Fit w={148} className="mt-0.5 ml-[18px]">temperature</Fit>
                    <div className="flex-1" />
                    <UpDown />
                  </div>
                  <div className="ml-[22px] h-10 w-[300px] shrink-0 rounded-[10px] bg-[#f4f4f4] shadow-[0_1px_2px_rgba(0,0,0,0.2)]" />
                </div>
                <div className="mt-[25px] flex h-[46px] shrink-0 gap-3 pl-[14px]">
                  <div className={`${box} h-10 w-[142px] pb-0.5 pl-[26px]`}>
                    <EditMapIcon size={32} />
                    <Fit w={46} className="ml-[12px]">Edit</Fit>
                  </div>
                  <MiniBtn><SeparateMapIcon size={32} /></MiniBtn>
                  <MiniBtn><RescaleIcon size={36} /></MiniBtn>
                  <MiniBtn><RescaleCIcon size={36} /></MiniBtn>
                  <MiniBtn><RescaleTIcon size={36} /></MiniBtn>
                  <MiniBtn />
                </div>
              </div>
              <div className="ml-0.5 h-full w-[26px] bg-[#f9f9f9] pt-1.5">
                <div className="ml-1.5 h-[99px] w-4 rounded-full bg-[#7e7e7e]" />
              </div>
            </div>
            <div className="flex h-[30px] shrink-0 pl-[14px]">
              <div className="mt-0.5 flex h-[27px] w-[624px] items-center bg-[#f9f9f9] pl-1.5">
                <div className="h-4 w-[411px] rounded-full bg-[#7e7e7e]" />
              </div>
              <div className="h-full w-[30px] border-t border-l border-[#dcdcdc] bg-white" />
            </div>
          </div>
        </div>
        <div className="h-full w-[2px] shrink-0 bg-[#939393]" />

        <div className="flex h-full flex-1 flex-col overflow-hidden">
          <div className="mt-[18px] flex h-[850px] w-[1600px] shrink-0 flex-col rounded-l-[12px] border border-[#d3d3d3] bg-[#e4e4e4]">
            <div className="-mt-[19px] flex h-[52px] shrink-0 items-start">
              <div className="mt-[3px] ml-[639px] flex h-[39px] w-[256px] items-center rounded-l-[10px] bg-linear-to-b from-[#2a90ff] to-[#0076ff] pl-1 text-white">
                <div className="h-8 w-8 border-[3px] border-t-[9px] border-[#33373c]" />
                <Fit w={116} className="ml-[30px]">Layout #1</Fit>
                <RoundX className="mb-px ml-[32px]" />
              </div>
              <div className="flex h-[40px] w-[58px] items-center justify-center rounded-r-[10px] bg-white pt-1 pl-2 shadow-[0_1px_2px_rgba(0,0,0,0.2)]">+</div>
            </div>
            <div className="ml-[5px] flex h-14 shrink-0 bg-[#ececec]">
              <div className="flex h-14 w-[1162px] shrink-0 flex-col border-t border-white">
                <div className="flex h-[52px] items-center bg-linear-to-b from-[#ededed] to-[#c8c8c8] pt-0.5">
                  <Cell className="w-14"><S><MiniCam /><path d={MC} fill="#ee1c24" stroke="#7a3a30" strokeWidth="1" /></S></Cell>
                  <Cell className="w-14"><S><MiniCam fade /><path transform="translate(32 0) scale(-1 1)" d={MC} fill="#bdd8b0" stroke="#9aa68e" strokeWidth="1" /></S></Cell>
                  <Sep />
                  <Cell className="w-14"><S><MiniCam y={5} /><path d="M-1 5V-1H5M27 -1H33V5M-1 28V33H5M27 33H33V28" stroke={GY} /></S></Cell>
                  <Sep />
                  <Cell className="w-14"><Fit w={26} className="text-[22px] font-bold text-[#6f6f57]">2D</Fit></Cell>
                  <Cell className="w-14"><S><MiniCam /><path d="M16 16L20 14L31 28L32 33L27 31Z" fill="#d9a92b" stroke="#7a652a" strokeWidth="1" /></S></Cell>
                  <Sep />
                  <Cell className="w-14"><S><Dash /><path d={PLUS} fill={GR} /></S></Cell>
                  <Cell className="w-14"><S><Dash /><path d="M8 13.500H24V18.500H8Z" fill="#ee1c24" /></S></Cell>
                  <Cell className="w-14"><S><Dash /><path transform="translate(-1 -2) scale(.75)" d={PLUS} fill={GR} /><path d="M5 20H17V24H5Z" fill="#ee1c24" /><Cursor /></S></Cell>
                  <Sep />
                  <Cell className="w-14"><S><Dash /><path d="M16 7L25.500 24H6.500Z" fill={GR} /><Cursor /></S></Cell>
                  <Cell className="w-14 rounded-t-[8px] bg-[#aaa]/70"><S><Dash /><path d="M16 5L25 23H7Z" stroke="#c9c9c9" strokeWidth="1" /><circle cx="16" cy="6" r="2.300" fill="#e0402f" stroke="#a55" strokeWidth="1" /><circle cx="7" cy="23" r="2.300" fill="#e0402f" stroke="#a55" strokeWidth="1" /><Cursor /></S></Cell>
                  <Cell className="w-14"><S><path d="M1 2V25L14 31M10 1H1M22 20V30" stroke={GY} strokeDasharray="4 3.500" /><path d="M6 10L18 1L31 6V18L13 20L6 19Z" fill={GR} stroke={DG} /><path d="M6 10L13 12L31 6M13 12V20" stroke={DG} /><Cursor x={18} y={22} /></S></Cell>
                  <Cell className="w-14"><S><path d="M1 2V25L14 31" stroke={GY} strokeDasharray="4 3.500" /><path d="M6 10L18 1L31 6V18" stroke="#c99" strokeWidth="1" strokeDasharray="2 2" />{[[6, 10], [12, 12], [30, 18], [6, 19], [11, 20], [30, 5]].map(([x, y], i) => <circle key={i} cx={x} cy={y} r="1.700" fill="#e0402f" stroke="none" />)}<Cursor x={17} y={22} /></S></Cell>
                  <Cell className="w-14"><S><path d="M2 8V26M20 3L24 16L32 22L22 32L12 26" stroke={GY} strokeDasharray="4 3.500" /><path d="M3 16L15 9V24Z" fill={GR} stroke={DG} /></S></Cell>
                  <Cell className="w-14"><S><path d="M2 8V20L14 31L24 32L32 22L26 16L28 4" stroke={GY} strokeDasharray="4 3.500" />{[[6, 9], [12, 6], [20, 8], [7, 15], [13, 15], [14, 22], [22, 25]].map(([x, y], i) => <circle key={i} cx={x} cy={y} r="2.300" fill="#e0402f" stroke="#a77" strokeWidth="1" />)}</S></Cell>
                  <Cell className="w-14"><S><Dash /><circle cx="9" cy="9" r="4" fill={BL} /><circle cx="9" cy="23" r="4" fill={BL} /><circle cx="22" cy="18" r="5.500" fill={GR} /><Cursor /></S></Cell>
                  <Cell className="w-14"><S><path d="M1 4V25L14 31" stroke={GY} strokeDasharray="4 3.500" /><path d="M6 10L18 1L31 6V18L13 20L6 19Z" fill={GR} stroke={DG} /><path d="M6 10L13 12L31 6M13 12V20" stroke={DG} />{[[9, 9], [15, 9], [9, 16], [18, 16]].map(([x, y], i) => <circle key={i} cx={x} cy={y} r="2" fill="#f0a020" stroke="#a77" strokeWidth=".8" />)}<circle cx="4" cy="5" r="2" fill={BL} stroke="none" /><circle cx="4" cy="21" r="2" fill={BL} stroke="none" /><Cursor x={16} y={22} /></S></Cell>
                  <Cell className="w-14"><S><g opacity=".65"><path d="M3 13L14 3L27 2L26 18L21 29H3Z" fill="#f3bd3a" /><path d="M3 13H21L27 3M21 13V29" />{[[3, 13], [21, 13], [3, 29], [26, 16]].map(([x, y], i) => <circle key={i} cx={x} cy={y} r="2.300" fill="#999" stroke="none" />)}<Cursor /></g></S></Cell>
                  <Cell className="w-14"><S><g opacity=".65"><circle cx="12" cy="16" r="4.500" fill="#f3bd3a" /><Cursor x={16} y={21} /></g></S></Cell>
                  <Cell className="w-14"><S><path d="M13 7L23 23H4Z" fill={GR} stroke={DG} /><Cursor x={18} y={20} /></S></Cell>
                  <More className="ml-[17px]" />
                </div>
                <div className="h-[3px] bg-[#b0b0b0]" />
              </div>
              <div className="flex w-[196px] shrink-0 items-center pl-0.5">
                <div className="border-b-[3px] border-black pt-[3px] pb-[2px]">
                  <Fit w={171} className="text-[25px] font-bold text-black">RenderView1</Fit>
                </div>
              </div>
              <ViewButton><div className="flex h-7 w-[28px] border-2 border-[#8a8a8a] bg-[#ced5ec]"><div className="w-[13px] border-r-2 border-[#8a8a8a]" /></div></ViewButton>
              <ViewButton><div className="flex h-7 w-[28px] flex-col border-2 border-[#8a8a8a] bg-[#ced5ec]"><div className="h-[13px] border-b-2 border-[#8a8a8a]" /></div></ViewButton>
              <ViewButton><div className="h-9 w-9 border-[3px] border-t-[10px] border-[#33373c]" /></ViewButton>
              <ViewButton><RoundX /></ViewButton>
            </div>
            <div className="mt-[2px] ml-[5px] h-[752px] w-[1590px] shrink-0 border-4 border-[#006adf] bg-[#e9ecf0] p-[2px]">
              <div className="relative h-[740px] w-full overflow-hidden bg-[#52576e] font-['Lato',sans-serif] text-white">
                <div className="absolute top-[108px] left-[526px] h-[524px] w-[524px] bg-[#3b4cc0]" />
                <svg width="80" height="80" viewBox="0 0 80 80" className="absolute top-[590px] left-[82px]" fill="none">
                  <path d="M10.500 57V16" stroke="#d8d800" />
                  <path d="M10.500 6L14 16H7Z" fill="#e6e600" />
                  <path d="M7 16.500H14" stroke="#333" />
                  <path d="M14 57.500H23" stroke="#ddd" />
                  <path d="M23 57.500H52" stroke="#d11" />
                  <path d="M51 54L61 57.500L51 61Z" fill="#e60000" stroke="#400" strokeWidth=".6" />
                  <circle cx="10.500" cy="57.500" r="4.500" fill="#006400" />
                  <path d="M13 46H21.500L14 55" stroke="#fff" strokeWidth="1.400" />
                  <path d="M13.500 6L17.500 11.500L21.500 6M17.500 11.500V17" stroke="#fff" strokeWidth="1.400" />
                  <path d="M55 47.500L62 58M62 47.500L55 58" stroke="#fff" strokeWidth="1.400" />
                </svg>
                <div className="absolute top-[477px] left-[1323px] h-[244px] w-[31px] bg-[linear-gradient(to_bottom,#b40426_0%,#d65244_12%,#ee8468_22%,#f7b194_34%,#ecd3c5_44%,#dddddd_50%,#c9d7f0_56%,#aac7fd_67%,#7b9ff9_80%,#5673e0_90%,#3b4cc0_100%)]" />
                <div className="absolute top-[477px] left-[1347px] h-px w-[23px] bg-white" />
                <div className="absolute top-[560px] left-[1347px] h-px w-[23px] bg-white" />
                <div className="absolute top-[614px] left-[1347px] h-px w-[23px] bg-white" />
                <div className="absolute top-[668px] left-[1347px] h-px w-[23px] bg-white" />
                <div className="absolute top-[721px] left-[1347px] h-px w-[23px] bg-white" />
                {legend.map(([t, pos, w]) => (
                  <div key={t} className={`absolute left-[1381px] flex h-10 items-center text-[33px] font-light ${pos}`}>
                    <Fit w={w}>{t}</Fit>
                  </div>
                ))}
                <div className="absolute top-[499px] left-[1529px] flex h-[198px] w-10 items-center justify-center text-[36px]">
                  <div className="-rotate-90 font-light"><Fit w={198}>temperature</Fit></div>
                </div>
              </div>
            </div>
          </div>

          <div className="-mt-px h-[2px] w-full shrink-0 bg-[#9c9c9c]" />
          <DockHeader title="Output Messages" w={186} pad="pl-[4px]" shift="pl-[22px]" className="h-[45px]" />
          <div className="mt-[24px] ml-6 flex h-[147px] w-[1551px] shrink-0 flex-col border border-t-2 border-[#b5b5b5] border-t-[#929292] bg-white">
            <div className="h-9 bg-white" />
            <div className="h-9 bg-[#f4f5f5]" />
            <div className="h-9 bg-white" />
            <div className="h-9 bg-[#f4f5f5]" />
          </div>
          <div className="mt-[38px] flex h-10 shrink-0 items-center pl-7">
            <div className="size-7 shrink-0 rounded-[6px] border border-[#c2c2c2] bg-white" />
            <Fit w={241} className="ml-[8px]">Show full messages</Fit>
            <div className="ml-[17px] flex size-7 shrink-0 items-center justify-center rounded-[6px] border border-[#d8d8d8] bg-[#f4f4f4]">
              <svg width="20" height="20" viewBox="0 0 20 20" fill="none" stroke="#b4b4b4" strokeWidth="3.200" strokeLinecap="round" strokeLinejoin="round"><path d="M2 11L7.500 17L18 2" /></svg>
            </div>
            <Fit w={381} className="ml-[8px] text-[#b0b0b0]">Always open for new messages</Fit>
            <div className={`${box} ml-[145px] h-10 w-[276px] justify-center`}><Fit w={219}>Copy to Clipboard</Fit></div>
            <div className={`${box} ml-8 h-10 w-[218px] justify-center`}><Fit w={161}>Save to File...</Fit></div>
            <div className={`${box} ml-[31px] h-10 w-[120px] justify-center`}><Fit w={63}>Clear</Fit></div>
          </div>
        </div>
      </div>

      {/* status bar */}
      <div className="flex h-[50px] w-full shrink-0 border-t border-[#6e6e6e] bg-linear-to-b from-[#e6e6e6] to-[#b9b9b9]">
        <div className="flex w-[750px] shrink-0 items-center pt-[10px] pl-[2px]">
          <Fit w={556}>Extracts and plots data in field data over time.</Fit>
        </div>
        <div className="mt-2 flex h-11 w-11 shrink-0 items-center justify-center border-2 border-[#bdbdbd] bg-[#e0e0e0]">
          <svg width="18" height="18" viewBox="-7 -7 14 14" className="mb-1"><path d={X_PATH} fill="#ea7a7e" stroke="#a9a595" strokeWidth=".9" /></svg>
        </div>
        <div className="mt-1.5 ml-1 h-12 w-[706px] shrink-0 border-t-2 border-r-2 border-l-2 border-[#b5b5b5] border-r-white" />
        <div className="mt-1.5 ml-[12px] flex h-12 w-[755px] shrink-0 overflow-hidden rounded-t-[5px] border-2 border-[#a3a3a3] bg-white">
          <div className="flex w-[409px] shrink-0 items-center justify-end border-r-2 border-[#7d997d] bg-linear-to-b from-[#d8fad4] to-[#b5dcb1] pt-[2px]">
            <Fit w={354} className="-mr-[3px] text-black">StarblodeMacBook-Pro.local:</Fit>
          </div>
          <div className="flex items-center pt-[2px] pl-[8px]">
            <Fit w={279}>4.3 GiB/8.0 GiB 54.2%</Fit>
          </div>
        </div>
      </div>

      {/* hover hint over the layout tab */}
      <div className="absolute top-[350px] left-[1373px] flex h-8 w-[493px] items-center border border-[#c4c4c4] bg-[#fbfbfb]/95 pb-0.5 pl-[4px] shadow-[0_4px_24px_rgba(0,0,0,0.18)]">
        <Fit w={482} className="text-[22px]">Extracts and plots data in field data over time.</Fit>
      </div>
    </div>
  );
}
